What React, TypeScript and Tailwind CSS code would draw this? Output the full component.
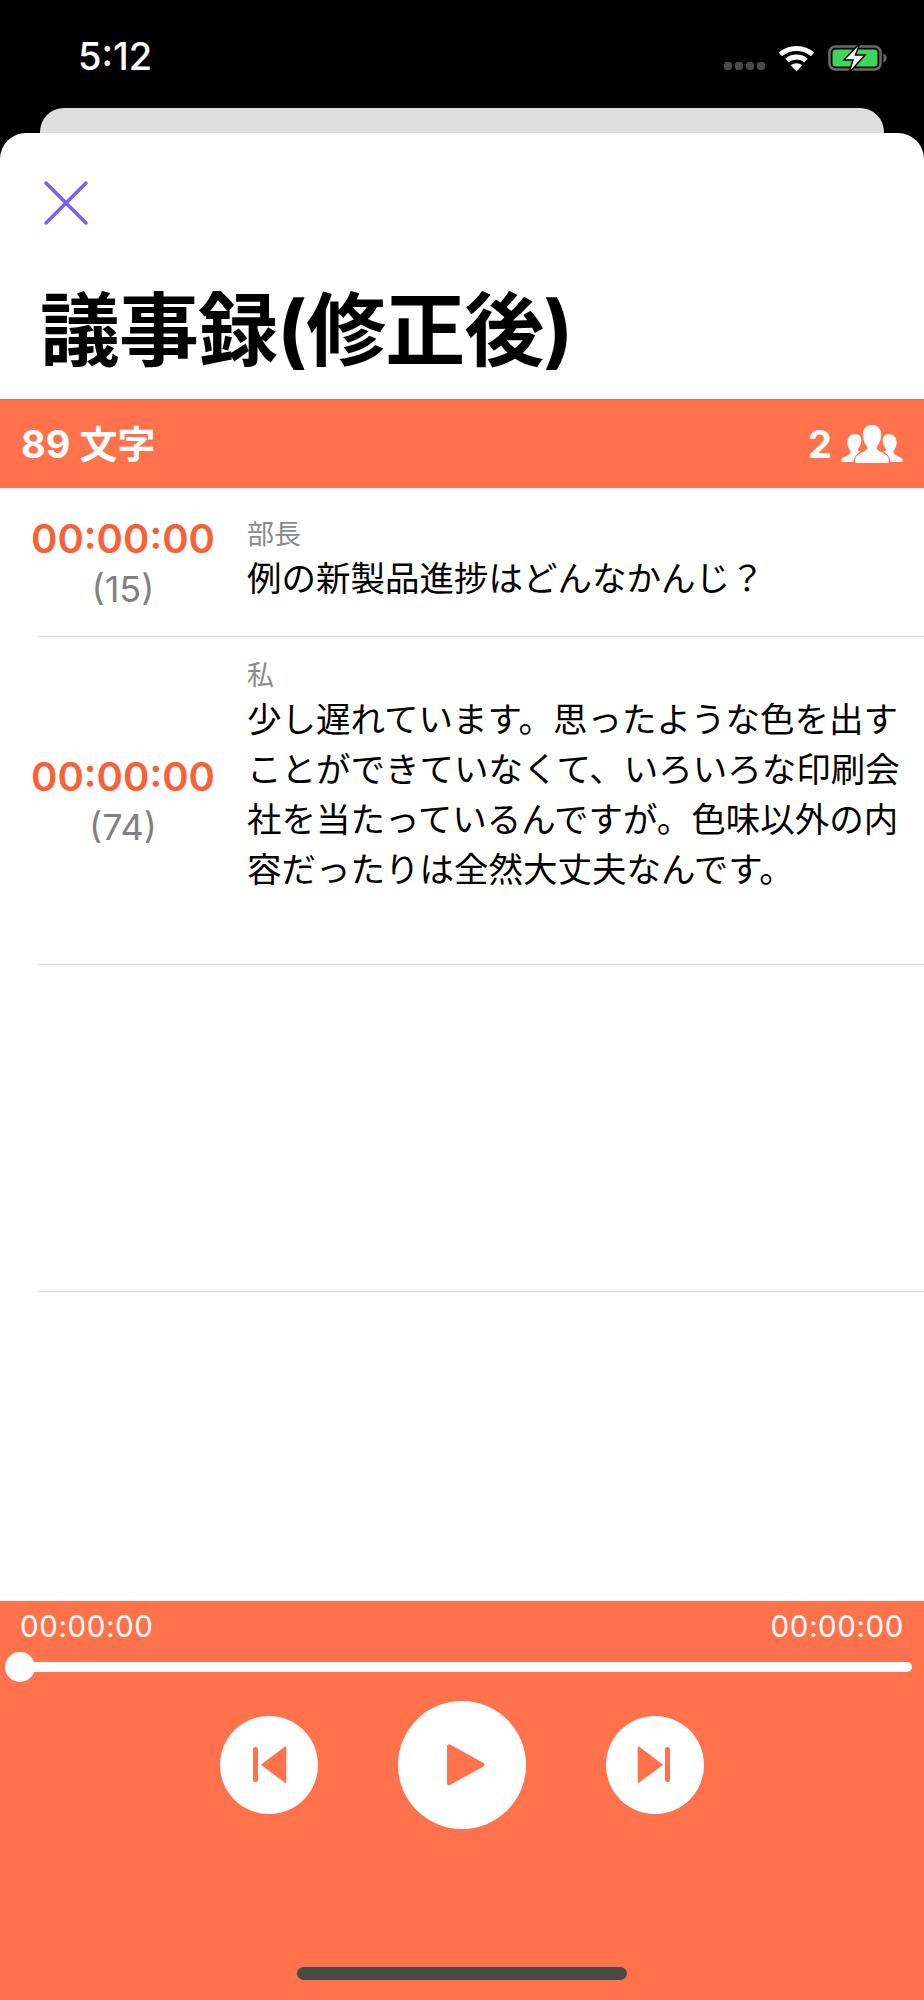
import React from "react";

const sans = "font-['Inter','Noto_Sans_CJK_JP',sans-serif]";

function Wifi() {
  return (
    <svg width="37" height="27" viewBox="0 0 36 27" fill="none" stroke="#fff" strokeWidth="5">
      <path d="M2 9.5C10.5 1.5 25.5 1.5 34 9.5" />
      <path d="M8.5 15.5C13.5 10.8 22.5 10.8 27.5 15.5" />
      <path d="M18 26.5L12.2 20.3C15.5 17.6 20.5 17.6 23.8 20.3Z" fill="#fff" stroke="none" />
    </svg>
  );
}

function Battery() {
  return (
    <svg width="60" height="30" viewBox="0 0 60 30">
      <rect x="1.5" y="3.5" width="51" height="23" rx="6" fill="none" stroke="#6b6b6b" strokeWidth="2.5" />
      <rect x="4.5" y="6.5" width="45" height="17" rx="3.5" fill="#40d65c" />
      <path d="M55.5 10.5c2 .6 3 2.3 3 4.5s-1 3.900-3 4.500z" fill="#6b6b6b" />
      <path d="M32 0L16 17h9l-4 13 16-18h-9.500z" fill="#fff" stroke="#000" strokeWidth="1.500" />
    </svg>
  );
}

function People() {
  return (
    <svg width="62" height="38" viewBox="0 0 62 38" fill="#fff">
      <path d="M14 9c4.500 0 6.500 3.500 6.300 7-.2 3-1.500 6-3 7.500-.8 1.500.5 2.500 2 3.200-2.500 1.500-6 3.600-7 10.300H1.500C-.5 37.500 0 34 1.500 33c3-2 7-2.500 8-5.500.3-1.500-.8-2.500-1.800-4.500C6.500 20.500 6 18 6.500 15.500 7 12 10 9 14 9z" />
      <path d="M48 9c-4.500 0-6.500 3.500-6.300 7 .2 3 1.500 6 3 7.500.8 1.500-.5 2.500-2 3.200 2.500 1.500 6 3.600 7 10.300h10.800c2 .5 1.500-3 0-4-3-2-7-2.500-8-5.500-.3-1.500.8-2.500 1.800-4.500 1.200-2.500 1.700-5 1.200-7.500C55 12 52 9 48 9z" />
      <path d="M31 0c6.500 0 9.500 5 9.200 10.500-.3 4.500-2 8.500-4.200 11-1 2 .2 3.500 2.500 4.700 3.500 1.700 7 3 8.500 5.800 1 2 1 4 .5 6H14.500c-.5-2-.5-4 .5-6 1.500-2.800 5-4.100 8.500-5.800 2.300-1.200 3.500-2.700 2.500-4.700-2.200-2.500-3.900-6.500-4.200-11C21.500 5 24.500 0 31 0z" />
    </svg>
  );
}

function PrevIcon() {
  return (
    <svg width="34" height="38" viewBox="0 0 34 38" fill="#ff724c">
      <rect x="0" y="1" width="5" height="35" rx="2.500" />
      <path d="M32 .6c.6-.4 1.300 0 1.300.8v34.600c0 .8-.7 1.200-1.300.8L8.500 19.200c-.3-.3-.3-.7 0-1z" />
    </svg>
  );
}

function NextIcon() {
  return (
    <svg width="34" height="38" viewBox="0 0 34 38" fill="#ff724c">
      <path d="M2 .6C1.400.2.700.6.700 1.400v34.600c0 .8.700 1.200 1.300.8l23.500-17.600c.3-.3.300-.7 0-1z" />
      <rect x="28" y="1" width="5" height="35" rx="2.500" />
    </svg>
  );
}

function PlayIcon() {
  return (
    <svg width="38" height="42" viewBox="0 0 38 42" fill="#ff724c">
      <path d="M0 2.500C0 .700 1.600-.300 3 .500l33.500 18.600c1.300.7 1.300 2.600 0 3.300L3 41C1.600 41.800 0 40.800 0 39z" />
    </svg>
  );
}

function TranscriptRow({
  time,
  count,
  speaker,
  lines,
  rowClass,
  textClass,
}: {
  time: string;
  count: string;
  speaker: string;
  lines: string[];
  rowClass: string;
  textClass: string;
}) {
  return (
    <div className={`ml-[39px] flex shrink-0 border-b border-[#d8d8d8] ${rowClass}`}>
      <div className="flex w-[208px] shrink-0 flex-col items-center justify-center pr-[40px]">
        <div className="text-[40px] leading-[46px] font-semibold whitespace-nowrap text-[#f5623a]">{time}</div>
        <div className="mt-[7px] text-[36px] leading-[40px] text-[#808080]">{count}</div>
      </div>
      <div className={`min-w-0 flex-1 ${textClass}`}>
        <div className="text-[27px] leading-[34px] text-[#8a8a8a]">{speaker}</div>
        <div className="mt-[2px] text-[34.5px] leading-[50px] whitespace-nowrap text-black">
          {lines.map((line) => (
            <div key={line}>{line}</div>
          ))}
        </div>
      </div>
    </div>
  );
}

export default function App() {
  return (
    <div className={`flex h-[2000px] w-[924px] flex-col overflow-hidden bg-black ${sans}`}>
      {/* status bar */}
      <div className="flex h-[108px] shrink-0 items-start justify-between pt-[36px] pr-[36px] pl-[78px]">
        <div className="text-[38px] leading-[40px] font-medium text-white">5:12</div>
        <div className="mt-[7px] flex items-center">
          <div className="mr-[13px] mb-[3px] flex gap-[3px] self-end">
            <span className="h-[8px] w-[8px] rounded-[3px] bg-[#4a4a4a]" />
            <span className="h-[8px] w-[8px] rounded-[3px] bg-[#4a4a4a]" />
            <span className="h-[8px] w-[8px] rounded-[3px] bg-[#4a4a4a]" />
            <span className="h-[8px] w-[8px] rounded-[3px] bg-[#4a4a4a]" />
          </div>
          <div className="mr-[13px]">
            <Wifi />
          </div>
          <Battery />
        </div>
      </div>

      {/* card stacked behind the sheet */}
      <div className="mx-[40px] h-[25px] shrink-0 rounded-t-[24px] bg-[#dfdfdf]" />

      {/* sheet */}
      <div className="flex min-h-0 flex-1 flex-col overflow-hidden rounded-t-[26px] bg-white">
        <div className="h-[266px] shrink-0 pl-[43px]">
          <svg className="mt-[47px] block" width="46" height="46" viewBox="0 0 46 46" fill="none" stroke="#7a5cff" strokeWidth="3.500" strokeLinecap="round">
            <path d="M3 3L43 43M43 3L3 43" />
          </svg>
          <div className="mt-[49px] -ml-[3px] text-[80px] leading-[110px] font-bold tracking-[-1px] whitespace-nowrap text-black">
            議事録(修正後)
          </div>
        </div>

        <div className="flex h-[89px] shrink-0 items-center justify-between border-t border-[#f26a44] bg-[#ff724c] px-[21px] text-white">
          <div className="text-[38px] leading-[40px] font-bold">89 文字</div>
          <div className="flex items-center gap-[9px]">
            <span className="text-[38px] leading-[40px] font-bold">2</span>
            <People />
          </div>
        </div>

        <TranscriptRow
          time="00:00:00"
          count="(15)"
          speaker="部長"
          lines={["例の新製品進捗はどんなかんじ？"]}
          rowClass="h-[149px]"
          textClass="pt-[30px]"
        />
        <TranscriptRow
          time="00:00:00"
          count="(74)"
          speaker="私"
          lines={[
            "少し遅れています。思ったような色を出す",
            "ことができていなくて、いろいろな印刷会",
            "社を当たっているんですが。色味以外の内",
            "容だったりは全然大丈夫なんです。",
          ]}
          rowClass="h-[328px]"
          textClass="pt-[22px]"
        />
        <div className="ml-[39px] h-[327px] shrink-0 border-b border-[#d8d8d8]" />
        <div className="flex-1" />

        {/* player */}
        <div className="flex h-[399px] shrink-0 flex-col bg-[#ff724c] px-[20px] text-white">
          <div className="mt-[8px] flex justify-between text-[29.5px] leading-[34px] tracking-[0.6px]">
            <span>00:00:00</span>
            <span>00:00:00</span>
          </div>
          <div className="relative mt-[19px] -mr-[8px] h-[10px] rounded-full bg-white">
            <span className="absolute top-[-10px] left-[-15px] h-[30px] w-[30px] rounded-full bg-white" />
          </div>
          <div className="mt-[29px] flex items-center justify-center gap-[80px]">
            <button className="flex h-[98px] w-[98px] items-center justify-center rounded-full bg-white pl-[1px]">
              <PrevIcon />
            </button>
            <button className="flex h-[128px] w-[128px] items-center justify-center rounded-full bg-white pl-[8px]">
              <PlayIcon />
            </button>
            <button className="flex h-[98px] w-[98px] items-center justify-center rounded-full bg-white pr-[3px]">
              <NextIcon />
            </button>
          </div>
          <div className="mt-auto mb-[20px] ml-[277px] h-[13px] w-[330px] rounded-full bg-[#4a4a4a]" />
        </div>
      </div>
    </div>
  );
}
